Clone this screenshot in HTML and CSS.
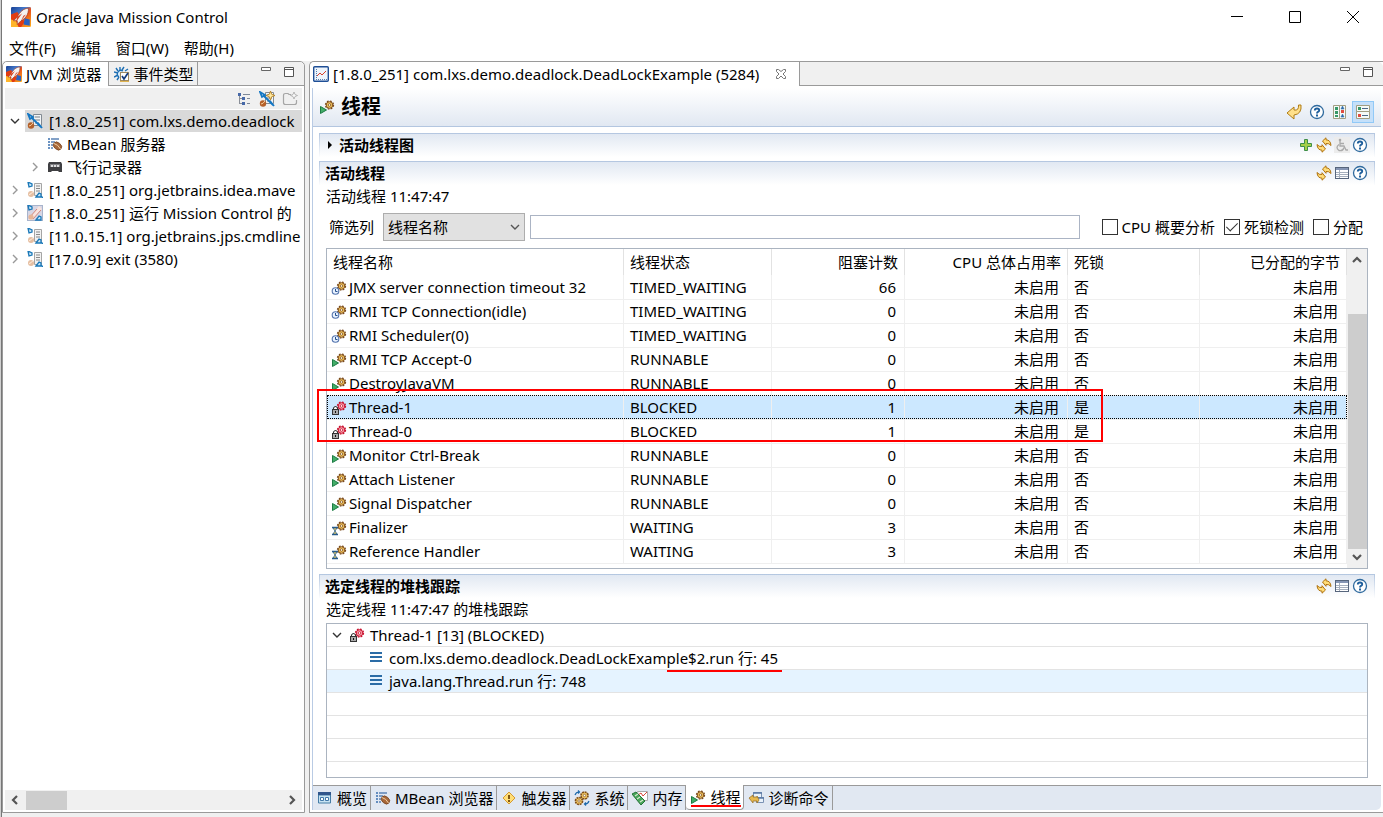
FILE: index.html
```
<!DOCTYPE html>
<html lang="zh-CN">
<head>
    <meta charset="UTF-8">
    <meta name="viewport" content="width=device-width, initial-scale=1.0">
    <title>Oracle Java Mission Control</title>
    <link rel="stylesheet" href="styles.css">
</head>
<body>
    <svg class="defs" aria-hidden="true">
        <defs>
            <linearGradient id="sky" x1="0" y1="0" x2="1" y2="1">
                <stop offset="0" stop-color="#163f94"/>
                <stop offset=".4" stop-color="#4a7fd0"/>
                <stop offset=".55" stop-color="#e8501c"/>
                <stop offset="1" stop-color="#ffb21c"/>
            </linearGradient>
        </defs>
        <symbol id="app" viewBox="0 0 16 16">
            <rect width="16" height="16" rx="1" fill="url(#sky)"/>
            <path d="M0 6l5-2 6 8-3 4H0z" fill="#e23c12"/>
            <path d="M0 10l4 1 2 5H0z" fill="#ffb52a"/>
            <path d="M14 1C10 1 7 4 5 8l-3 3 3 0 0 3 3-3c4-2 6-5 6-10z" fill="#f4f2f0" stroke="#a23a20" stroke-width=".6"/>
            <path d="M5 8l4-3-5 7zM8 11l4-5-2 1z" fill="#d8401c"/>
            <path d="M11 9l4 1v5l-5-1z" fill="#2a62c0"/>
        </symbol>
        <symbol id="events" viewBox="0 0 16 16">
            <path d="M6 1v3M2 2l2 3M10 1L8 4M0 6l4 1M0 11l4-2M3 14l2-3M11 5l3-2" stroke="#1d6fb4" stroke-width="1.4" fill="none"/>
            <path d="M9 5q-3-2-5 1t1 5" stroke="#1d6fb4" stroke-width="1.3" fill="#d9ecf8"/>
            <rect x="6.5" y="6.5" width="8" height="8" fill="#fff" stroke="#a08a60"/>
            <path d="M8 10l2 3 4-6" stroke="#123a7c" stroke-width="1.7" fill="none"/>
            <path d="M6 15.5h9" stroke="#e0b450"/>
        </symbol>
        <symbol id="hier" viewBox="0 0 16 16">
            <path d="M3.500 4v9M3.500 7.500h3M3.500 12.500h3" stroke="#8a8f98" fill="none"/>
            <path d="M2 2h3v3H2zM6 6h3v3H6zM6 11h3v3H6z" fill="#4668a8"/>
            <path d="M7 3.500h7M11 7.500h3M11 12.500h3" stroke="#7d8898"/>
        </symbol>
        <symbol id="conn" viewBox="0 0 16 16">
            <path d="M6.500 1.500h8v11h-8z" fill="#f2f4f6" stroke="#828a92"/>
            <path d="M8 4h5M8 7h5M8 10h4" stroke="#777e86"/>
            <circle cx="4" cy="12.500" r="3.200" fill="#b4602a"/>
            <path d="M2 13q2 0 4-3" stroke="#f4cfa0" fill="none"/>
            <path d="M1 1l2 5 3-2zM4 4l10 10M11 10l4 5" stroke="#1477c4" stroke-width="1.800" fill="none"/>
        </symbol>
        <symbol id="conn-new" viewBox="0 0 16 16">
            <use href="#conn"/>
            <path d="M11.500 0l1.200 3.300L16 4.500l-3.300 1.200L11.500 9l-1.200-3.300L7 4.500l3.300-1.200z" fill="#ffe9a0" stroke="#b07818" stroke-width=".8"/>
        </symbol>
        <symbol id="conn-off" viewBox="0 0 16 16">
            <path d="M7.500 1.500h7v12h-7z" fill="#f2f2f2" stroke="#a5a5a5"/>
            <path d="M9 4h4M9 6.500h4M9 9h4" stroke="#888"/>
            <circle cx="4" cy="12" r="3" fill="#e6bfa2"/>
            <path d="M2 12.500q2 0 4-3" stroke="#fff0e2" fill="none"/>
            <path d="M1 0l1 5 3-1V2zM9 15l3-4 2 1v3zM14 14l2 2" stroke="#1a78b8" stroke-width="1.300" fill="#c8e4f5"/>
        </symbol>
        <symbol id="conn-self" viewBox="0 0 16 16">
            <rect x=".5" y=".5" width="15" height="15" fill="#d8d6e4" stroke="#a8b4cc"/>
            <path d="M1 15L12 1l3 3L5 15z" fill="#f8e4df"/>
            <path d="M2 13l8-9M6 14l8-9" stroke="#d48578"/>
            <circle cx="4" cy="12" r="2.600" fill="#e6b597"/>
            <path d="M1 0l1 5 3-1V2zM9 15l3-4 2 1v3z" stroke="#1a78b8" stroke-width="1.300" fill="#c8e4f5"/>
        </symbol>
        <symbol id="folder-new" viewBox="0 0 16 16">
            <path d="M9 3.500H7L6 2.500H3.500q-2 0-2 2v7q0 2 2 2h9q2 0 2-2V9" fill="none" stroke="#a6a6a6" stroke-width="1.200"/>
            <path d="M12 1l1 2.500 2.500 1-2.500 1L12 8l-1-2.500-2.500-1 2.500-1z" fill="#f8f8f8" stroke="#a6a6a6" stroke-width=".8"/>
        </symbol>
        <symbol id="mbean" viewBox="0 0 16 16">
            <path d="M1 3h2M1 6h2M1 9h2M1 12h2" stroke="#3a6fae" stroke-width="1.600"/>
            <path d="M4 3h8M4 6h4M4 9h2M4 12h2" stroke="#5b83b5" stroke-width="1.400"/>
            <ellipse cx="10.500" cy="10" rx="4.500" ry="3.400" transform="rotate(40 10.500 10)" fill="#a8683a" stroke="#6e3c18" stroke-width=".7"/>
            <path d="M7 7.500q4 1 6.500 5.500" stroke="#f2d0a4" fill="none"/>
        </symbol>
        <symbol id="recorder" viewBox="0 0 16 16">
            <path d="M2 3h12l1 2v8h-3l-1-1H5l-1 1H1V5z" fill="#3f3f42"/>
            <path d="M3 5h10v3H3z" fill="#808084"/>
            <path d="M4 7h2M7 7h2M10 7h2" stroke="#fff" stroke-width="1.500"/>
        </symbol>
        <symbol id="chart" viewBox="0 0 16 16">
            <rect x=".7" y=".7" width="14.600" height="14.600" rx="1" fill="#eef5fc" stroke="#1f4f96" stroke-width="1.400"/>
            <path d="M3 13.500h11" stroke="#567cae" stroke-dasharray="1 1"/>
            <path d="M3.500 3v10" stroke="#567cae" stroke-dasharray="1 1"/>
            <path d="M4 10l3-3 2 2 4-4" stroke="#d8402c" fill="none"/>
        </symbol>
        <symbol id="gear" viewBox="0 0 16 16">
            <circle cx="10.500" cy="6" r="4" fill="none" stroke="#7a4a1c" stroke-width="1.300" stroke-dasharray="1.800 1.340"/>
            <circle cx="10.500" cy="6" r="3.300" fill="#f2c35c" stroke="#80501c"/>
            <circle cx="10.500" cy="6" r="1.300" fill="#fff8e0" stroke="#80501c" stroke-width=".8"/>
        </symbol>
        <symbol id="run" viewBox="0 0 16 16">
            <use href="#gear"/>
            <path d="M1.500 7.500l6 3.500-6 3.500z" fill="#43ad68" stroke="#1d7c44"/>
        </symbol>
        <symbol id="timed" viewBox="0 0 16 16">
            <use href="#gear"/>
            <circle cx="4.500" cy="11" r="3.300" fill="#eaf3ff" stroke="#5374ae" stroke-width="1.100"/>
            <path d="M4.500 9V11.500h2" stroke="#24508e" fill="none"/>
        </symbol>
        <symbol id="wait" viewBox="0 0 16 16">
            <use href="#gear"/>
            <path d="M1 7.500h6M1 14.500h6" stroke="#285c8c" stroke-width="1.300"/>
            <path d="M2 8l4 0-2 3 2 3H2l2-3z" fill="#f4d462" stroke="#285c8c" stroke-width=".8"/>
        </symbol>
        <symbol id="blocked" viewBox="0 0 16 16">
            <circle cx="10.500" cy="6" r="4" fill="none" stroke="#c8102e" stroke-width="1.300" stroke-dasharray="1.800 1.340"/>
            <circle cx="10.500" cy="6" r="3.300" fill="#f8a0aa" stroke="#c8102e"/>
            <circle cx="10.500" cy="6" r="1.300" fill="#fff" stroke="#c8102e" stroke-width=".8"/>
            <path d="M2.500 10V8q2-3 4 0v2" fill="#fff" stroke="#333" stroke-width="1.100"/>
            <rect x="1.500" y="9.500" width="6" height="5" fill="#aaa" stroke="#333"/>
            <path d="M4.500 11v2" stroke="#111"/>
        </symbol>
        <symbol id="back" viewBox="0 0 16 16">
            <path d="M1 9l7-6v3q5 1 4.500-5H15q1 9-7 10v4z" fill="#ffe08a" stroke="#b07c14" stroke-linejoin="round"/>
        </symbol>
        <symbol id="help" viewBox="0 0 16 16">
            <circle cx="8" cy="8" r="6.500" fill="#fff" stroke="#2f6a9e" stroke-width="1.300"/>
            <path d="M5.800 6.500q0-2 2.200-2t2.200 1.700q0 1-1.200 1.600-1 .6-1 1.700" fill="none" stroke="#1f5f9c" stroke-width="1.900"/>
            <rect x="7" y="10.500" width="2" height="2" fill="#1f5f9c"/>
        </symbol>
        <symbol id="cols" viewBox="0 0 16 16">
            <path d="M1.500 1.500h6v13h-6zM7.500 1.500h6v13h-6z" fill="#f5faf8" stroke="#a29e82"/>
            <path d="M3 3h3v3H3zM3 7h3v3H3zM3 11h3v2H3z" fill="#389868"/>
            <path d="M9 5l1.500-3L12 5zM9 13l1.500-3 1.500 3z" fill="#2e6cac" stroke="#2e6cac" stroke-width=".6"/>
            <path d="M9 6h3v3H9z" fill="#e04c40"/>
        </symbol>
        <symbol id="rows" viewBox="0 0 16 16">
            <path d="M1.500 1.500h13v6h-13zM1.500 7.500h13v7h-13z" fill="#f5faf8" stroke="#a29e82"/>
            <path d="M3 3h3v3H3z" fill="#389868"/>
            <path d="M3 10h3v3H3z" fill="#e04c40"/>
            <path d="M7 4.500h6M7 11.500h6" stroke="#4a6888"/>
        </symbol>
        <symbol id="plus" viewBox="0 0 16 16">
            <path d="M6.500 2.500h3v4h4v3h-4v4h-3v-4h-4v-3h4z" fill="#a5cf49" stroke="#3f8f48"/>
        </symbol>
        <symbol id="refresh" viewBox="0 0 16 16">
            <path d="M6.500 4L10 .8v2q4.500 0 5 5.700-2-2.500-5-2v1.800zM9.500 12L6 15.200v-2q-4.500 0-5-5.700 2 2.500 5 2V7.700z" fill="#ffdc78" stroke="#b07310" stroke-linejoin="round"/>
        </symbol>
        <symbol id="wheel" viewBox="0 0 16 16">
            <rect width="16" height="16" fill="#ececec"/>
            <circle cx="6" cy="3" r="1.300" fill="#aaa"/>
            <path d="M6 4v5h4l2 4h2M6 6.500h4" fill="none" stroke="#aaa" stroke-width="1.300"/>
            <path d="M5 7.500q-4 3 0 6 4 1 5-3" fill="none" stroke="#aaa" stroke-width="1.300"/>
        </symbol>
        <symbol id="grid" viewBox="0 0 16 16">
            <rect x="1.500" y="2.500" width="13" height="11" fill="#fff" stroke="#56657c"/>
            <path d="M2 4h12" stroke="#8595b4" stroke-width="2"/>
            <path d="M2 7.500h12M2 9.500h12M2 11.500h12M5.500 5v8" stroke="#a6afbd"/>
        </symbol>
        <symbol id="frame" viewBox="0 0 16 16">
            <path d="M1.500 5v8h12V5z" fill="#c8e3f2" stroke="#457da6"/>
            <path d="M1 3.500h13" stroke="#30568c" stroke-width="3"/>
            <path d="M3.500 7.500h3v3h-3zM8.500 7.500h3v3h-3z" fill="#fff" stroke="#4179aa"/>
        </symbol>
        <symbol id="trigger" viewBox="0 0 16 16">
            <path d="M8 2l6 6-6 6-6-6z" fill="#ffdf78" stroke="#d69a32"/>
            <path d="M8 5v4M8 10v2" stroke="#754a08" stroke-width="1.800"/>
        </symbol>
        <symbol id="system" viewBox="0 0 16 16">
            <circle cx="10.500" cy="5.500" r="3.500" fill="#f3c965" stroke="#80501c" stroke-width="1.700" stroke-dasharray="2 .7"/>
            <circle cx="5" cy="11" r="3.500" fill="#f3c965" stroke="#80501c" stroke-width="1.700" stroke-dasharray="2 .7"/>
            <circle cx="10.500" cy="5.500" r="1.200" fill="#fff" stroke="#80501c" stroke-width=".7"/>
            <circle cx="5" cy="11" r="1.200" fill="#fff" stroke="#80501c" stroke-width=".7"/>
            <path d="M1 5q1-3 4-3M4 .5L5.500 2 4 3.500M15 11q-1 3-4 3M12 12.500L10.500 14l1.500 1.500" fill="none" stroke="#1c69ab" stroke-width="1.200"/>
        </symbol>
        <symbol id="memory" viewBox="0 0 16 16">
            <path d="M5.500 1.500h10v9h-8z" fill="#fff" stroke="#aaa"/>
            <path d="M6 5l3-2 2 3 4-4" stroke="#d94538" fill="none"/>
            <path d="M0 4l4-2 9 9-4 4z" fill="#49a65b" stroke="#247338"/>
            <path d="M3 6l3-2M5 9l3-2M8 12l3-2" stroke="#d8ead0" stroke-width="1.200"/>
        </symbol>
        <symbol id="diag" viewBox="0 0 16 16">
            <path d="M5.500 2.500h8v5h-8zM8.500 7.500h7v5h-7z" fill="#e9f2fb" stroke="#7a92b4"/>
            <path d="M5 3h9M8 8h8" stroke="#5878a4" stroke-width="1.500"/>
            <path d="M1 8l4-3v2h4v-1l2 4-2 3v-2H5v2z" fill="#e8b94e" stroke="#9b752c" stroke-width=".8"/>
        </symbol>
        <symbol id="lines" viewBox="0 0 16 16">
            <path d="M2 3h12M2 7h12M2 11h12" stroke="#2b6ca6" stroke-width="2"/>
        </symbol>
        <symbol id="minimize" viewBox="0 0 16 16">
            <path d="M3.500 3.500h9v3h-9z" fill="#fff" stroke="#666"/>
        </symbol>
        <symbol id="maximize" viewBox="0 0 16 16">
            <path d="M3.500 3.500h9v9h-9zM3.500 5.500h9" fill="#fff" stroke="#555"/>
        </symbol>
        <symbol id="right" viewBox="0 0 16 16">
            <path d="M6 4l4 4-4 4" fill="none" stroke="currentColor" stroke-width="1.400"/>
        </symbol>
        <symbol id="down" viewBox="0 0 16 16">
            <path d="M4 6l4 4 4-4" fill="none" stroke="currentColor" stroke-width="1.400"/>
        </symbol>
        <symbol id="arrow" viewBox="0 0 16 16">
            <path d="M4 10l4-4 4 4" fill="none" stroke="#555" stroke-width="2.200"/>
        </symbol>
    </svg>

    <header class="titlebar">
        <svg class="logo"><use href="#app"/></svg>
        <span class="title">Oracle Java Mission Control</span>
        <button class="win-btn" aria-label="最小化"><svg viewBox="0 0 14 14"><path d="M1 6.500h12"/></svg></button>
        <button class="win-btn" aria-label="最大化"><svg viewBox="0 0 14 14"><path d="M1.500 1.500h11v11h-11z"/></svg></button>
        <button class="win-btn" aria-label="关闭"><svg viewBox="0 0 14 14"><path d="M1 1l12 12M13 1L1 13"/></svg></button>
    </header>
    <nav class="menubar">
        <button>文件(F)</button>
        <button>编辑</button>
        <button>窗口(W)</button>
        <button>帮助(H)</button>
    </nav>

    <main class="workbench">
        <aside class="pane">
            <div class="tabs">
                <button class="tab active browser-tab"><svg class="icon"><use href="#app"/></svg>JVM 浏览器</button>
                <button class="tab"><svg class="icon"><use href="#events"/></svg>事件类型</button>
                <div class="pane-controls">
                    <button aria-label="最小化"><svg class="icon"><use href="#minimize"/></svg></button>
                    <button aria-label="最大化"><svg class="icon"><use href="#maximize"/></svg></button>
                </div>
            </div>
            <div class="side-body">
                <div class="side-tools">
                    <button aria-label="树布局"><svg class="icon"><use href="#hier"/></svg></button>
                    <button aria-label="新建连接"><svg class="icon"><use href="#conn-new"/></svg></button>
                    <button aria-label="新建文件夹"><svg class="icon"><use href="#folder-new"/></svg></button>
                </div>
                <ul class="tree">
                    <li>
                        <div class="node"><svg class="twist open"><use href="#down"/></svg><span class="node-label selected"><svg class="icon"><use href="#conn"/></svg>[1.8.0_251] com.lxs.demo.deadlock</span></div>
                        <ul>
                            <li class="node"><span class="twist"></span><span class="node-label"><svg class="icon"><use href="#mbean"/></svg>MBean 服务器</span></li>
                            <li class="node"><svg class="twist"><use href="#right"/></svg><span class="node-label"><svg class="icon"><use href="#recorder"/></svg>飞行记录器</span></li>
                        </ul>
                    </li>
                    <li class="node"><svg class="twist"><use href="#right"/></svg><span class="node-label"><svg class="icon"><use href="#conn-off"/></svg>[1.8.0_251] org.jetbrains.idea.mave</span></li>
                    <li class="node"><svg class="twist"><use href="#right"/></svg><span class="node-label"><svg class="icon"><use href="#conn-self"/></svg>[1.8.0_251] 运行 Mission Control 的</span></li>
                    <li class="node"><svg class="twist"><use href="#right"/></svg><span class="node-label"><svg class="icon"><use href="#conn-off"/></svg>[11.0.15.1] org.jetbrains.jps.cmdline</span></li>
                    <li class="node"><svg class="twist"><use href="#right"/></svg><span class="node-label"><svg class="icon"><use href="#conn-off"/></svg>[17.0.9] exit (3580)</span></li>
                </ul>
                <div class="hscroll">
                    <button aria-label="向左"><svg class="icon to-left"><use href="#arrow"/></svg></button>
                    <div class="hthumb"></div>
                    <button aria-label="向右"><svg class="icon to-right"><use href="#arrow"/></svg></button>
                </div>
            </div>
        </aside>

        <section class="pane editor">
            <div class="tabs">
                <button class="tab active editor-tab"><svg class="icon"><use href="#chart"/></svg>[1.8.0_251] com.lxs.demo.deadlock.DeadLockExample (5284)<svg class="close" viewBox="0 0 12 12"><path d="M1.500 1.500h2l2.500 2 2.500-2h2v2L8 6l2.500 2.500v2h-2L6 8l-2.500 2.500h-2v-2L4 6 1.500 3.500z"/></svg></button>
                <div class="pane-controls">
                    <button aria-label="最小化"><svg class="icon"><use href="#minimize"/></svg></button>
                    <button aria-label="最大化"><svg class="icon"><use href="#maximize"/></svg></button>
                </div>
            </div>
            <div class="form">
                <div class="form-head">
                    <svg class="icon"><use href="#run"/></svg>
                    <h1>线程</h1>
                    <div class="form-tools">
                        <button aria-label="返回"><svg class="icon"><use href="#back"/></svg></button>
                        <button aria-label="帮助"><svg class="icon"><use href="#help"/></svg></button>
                        <button aria-label="垂直布局"><svg class="icon"><use href="#cols"/></svg></button>
                        <button class="pressed" aria-label="水平布局"><svg class="icon"><use href="#rows"/></svg></button>
                    </div>
                </div>

                <div class="sections">
                    <div class="section-head">
                        <span class="caret"></span>
                        <h2>活动线程图</h2>
                        <div class="section-tools">
                            <button aria-label="添加"><svg class="icon"><use href="#plus"/></svg></button>
                            <button aria-label="刷新"><svg class="icon"><use href="#refresh"/></svg></button>
                            <button aria-label="辅助功能" disabled><svg class="icon"><use href="#wheel"/></svg></button>
                            <button aria-label="帮助"><svg class="icon"><use href="#help"/></svg></button>
                        </div>
                    </div>

                    <div class="section-head">
                        <h2>活动线程</h2>
                        <div class="section-tools">
                            <button aria-label="刷新"><svg class="icon"><use href="#refresh"/></svg></button>
                            <button aria-label="表设置"><svg class="icon"><use href="#grid"/></svg></button>
                            <button aria-label="帮助"><svg class="icon"><use href="#help"/></svg></button>
                        </div>
                    </div>
                    <div class="section-body">
                        <p class="status">活动线程 11:47:47</p>
                        <div class="filter">
                            <label for="filter-column">筛选列</label>
                            <span class="select">
                                <select id="filter-column"><option>线程名称</option></select>
                                <svg class="icon"><use href="#down"/></svg>
                            </span>
                            <input type="text" class="filter-text" aria-label="筛选文本">
                            <div class="checks">
                                <label><input type="checkbox">CPU 概要分析</label>
                                <label><input type="checkbox" checked>死锁检测</label>
                                <label><input type="checkbox">分配</label>
                            </div>
                        </div>
                        <div class="threads">
                            <table>
                                <colgroup><col><col class="c-state"><col class="c-count"><col class="c-cpu"><col class="c-lock"><col class="c-bytes"></colgroup>
                                <thead>
                                    <tr><th>线程名称</th><th>线程状态</th><th class="num">阻塞计数</th><th class="num">CPU 总体占用率</th><th>死锁</th><th class="num">已分配的字节</th></tr>
                                </thead>
                                <tbody>
                                    <tr><td><svg class="icon"><use href="#timed"/></svg>JMX server connection timeout 32</td><td>TIMED_WAITING</td><td class="num">66</td><td class="num">未启用</td><td>否</td><td class="num">未启用</td></tr>
                                    <tr><td><svg class="icon"><use href="#timed"/></svg>RMI TCP Connection(idle)</td><td>TIMED_WAITING</td><td class="num">0</td><td class="num">未启用</td><td>否</td><td class="num">未启用</td></tr>
                                    <tr><td><svg class="icon"><use href="#timed"/></svg>RMI Scheduler(0)</td><td>TIMED_WAITING</td><td class="num">0</td><td class="num">未启用</td><td>否</td><td class="num">未启用</td></tr>
                                    <tr><td><svg class="icon"><use href="#run"/></svg>RMI TCP Accept-0</td><td>RUNNABLE</td><td class="num">0</td><td class="num">未启用</td><td>否</td><td class="num">未启用</td></tr>
                                    <tr><td><svg class="icon"><use href="#run"/></svg>DestroyJavaVM</td><td>RUNNABLE</td><td class="num">0</td><td class="num">未启用</td><td>否</td><td class="num">未启用</td></tr>
                                    <tr class="selected"><td><svg class="icon"><use href="#blocked"/></svg>Thread-1</td><td>BLOCKED</td><td class="num">1</td><td class="num">未启用</td><td>是</td><td class="num">未启用</td></tr>
                                    <tr><td><svg class="icon"><use href="#blocked"/></svg>Thread-0</td><td>BLOCKED</td><td class="num">1</td><td class="num">未启用</td><td>是</td><td class="num">未启用</td></tr>
                                    <tr><td><svg class="icon"><use href="#run"/></svg>Monitor Ctrl-Break</td><td>RUNNABLE</td><td class="num">0</td><td class="num">未启用</td><td>否</td><td class="num">未启用</td></tr>
                                    <tr><td><svg class="icon"><use href="#run"/></svg>Attach Listener</td><td>RUNNABLE</td><td class="num">0</td><td class="num">未启用</td><td>否</td><td class="num">未启用</td></tr>
                                    <tr><td><svg class="icon"><use href="#run"/></svg>Signal Dispatcher</td><td>RUNNABLE</td><td class="num">0</td><td class="num">未启用</td><td>否</td><td class="num">未启用</td></tr>
                                    <tr><td><svg class="icon"><use href="#wait"/></svg>Finalizer</td><td>WAITING</td><td class="num">3</td><td class="num">未启用</td><td>否</td><td class="num">未启用</td></tr>
                                    <tr><td><svg class="icon"><use href="#wait"/></svg>Reference Handler</td><td>WAITING</td><td class="num">3</td><td class="num">未启用</td><td>否</td><td class="num">未启用</td></tr>
                                </tbody>
                            </table>
                            <div class="vscroll">
                                <button aria-label="向上"><svg class="icon"><use href="#arrow"/></svg></button>
                                <div class="vthumb"></div>
                                <button aria-label="向下"><svg class="icon to-down"><use href="#arrow"/></svg></button>
                            </div>
                            <div class="marker"></div>
                        </div>
                    </div>

                    <div class="section-head">
                        <h2>选定线程的堆栈跟踪</h2>
                        <div class="section-tools">
                            <button aria-label="刷新"><svg class="icon"><use href="#refresh"/></svg></button>
                            <button aria-label="表设置"><svg class="icon"><use href="#grid"/></svg></button>
                            <button aria-label="帮助"><svg class="icon"><use href="#help"/></svg></button>
                        </div>
                    </div>
                    <div class="section-body grow">
                        <p class="status">选定线程 11:47:47 的堆栈跟踪</p>
                        <ul class="stack">
                            <li class="thread"><svg class="twist open"><use href="#down"/></svg><svg class="icon"><use href="#blocked"/></svg>Thread-1 [13] (BLOCKED)</li>
                            <li class="trace"><svg class="icon"><use href="#lines"/></svg><span>com.lxs.demo.deadlock.DeadLockExam<span class="underlined">ple$2.run 行: 45</span></span></li>
                            <li class="trace hot"><svg class="icon"><use href="#lines"/></svg>java.lang.Thread.run 行: 748</li>
                        </ul>
                    </div>
                </div>

                <nav class="pages">
                    <button><svg class="icon"><use href="#frame"/></svg>概览</button>
                    <button><svg class="icon"><use href="#mbean"/></svg>MBean 浏览器</button>
                    <button><svg class="icon"><use href="#trigger"/></svg>触发器</button>
                    <button><svg class="icon"><use href="#system"/></svg>系统</button>
                    <button><svg class="icon"><use href="#memory"/></svg>内存</button>
                    <button class="active"><svg class="icon"><use href="#run"/></svg>线程</button>
                    <button><svg class="icon"><use href="#diag"/></svg>诊断命令</button>
                </nav>
            </div>
        </section>
    </main>
</body>
</html>
```
FILE: styles.css
```
* {
    box-sizing: border-box;
}
body {
    display: flex;
    flex-direction: column;
    min-height: 100vh;
    margin: 0;
    padding-left: 1px;
    border-left: 1px solid #d0d0d0;
    box-shadow: inset 1px 0 #777;
    background-color: #fff;
    color: #000;
    font-family: "Noto Sans", "Noto Sans CJK SC", sans-serif;
    font-size: 15px;
    line-height: 22px;
}
h1, h2, p, ul {
    margin: 0;
    padding: 0;
}
ul {
    list-style: none;
}
button, input, select {
    font: inherit;
    color: inherit;
}
button {
    padding: 0;
    border: none;
    background: none;
    white-space: nowrap;
}
.defs {
    position: absolute;
    width: 0;
    height: 0;
}
.icon {
    display: block;
    flex: none;
    width: 16px;
    height: 16px;
}

/* window frame */
.titlebar {
    display: flex;
    align-items: center;
    height: 35px;
    padding: 0 1px 2px 9px;
}
.logo {
    width: 20px;
    height: 20px;
    margin-right: 5px;
}
.title {
    flex: 1;
}
.win-btn {
    display: flex;
    align-items: center;
    justify-content: center;
    width: 58px;
    height: 33px;
}
.win-btn svg {
    width: 14px;
    height: 14px;
    fill: none;
    stroke: #000;
}
.menubar {
    display: flex;
    align-items: center;
    gap: 15px;
    height: 26px;
    padding-left: 7px;
}
.workbench {
    flex: 1;
    display: grid;
    grid-template-columns: 303px minmax(0, 1fr);
    gap: 4px;
    padding-bottom: 4px;
    background-color: #f0f0f0;
}

/* panes and their tabs */
.pane {
    display: flex;
    flex-direction: column;
    min-width: 0;
    border: 1px solid #9a9a9a;
    border-radius: 5px 5px 0 0;
    background-color: #fff;
}
.editor {
    border-right: none;
    border-top-right-radius: 0;
}
.tabs {
    display: flex;
    height: 24px;
    border-bottom: 1px solid #9a9a9a;
    border-radius: 5px 5px 0 0;
    background-color: #f0f0f0;
}
.tab {
    display: flex;
    align-items: center;
    gap: 4px;
    height: 23px;
    padding: 0 3px 0 5px;
    border-right: 1px solid #9a9a9a;
}
.tab.active {
    height: 24px;
    padding: 0 6px 0 3px;
    border-radius: 5px 0 0 0;
    background-color: #fff;
}
.tab.editor-tab {
    padding-right: 12px;
}
.close {
    width: 12px;
    height: 12px;
    margin-left: 12px;
    fill: #fff;
    stroke: #777;
}
.pane-controls {
    display: flex;
    gap: 7px;
    margin-left: auto;
    padding-right: 7px;
}
.pane-controls button {
    height: 20px;
}

/* browser tree */
.side-body {
    flex: 1;
    display: flex;
    flex-direction: column;
    padding: 2px;
    overflow: hidden;
}
.side-tools {
    display: flex;
    align-items: center;
    justify-content: flex-end;
    gap: 7px;
    height: 21px;
    padding-right: 4px;
    background-color: #f0f0f0;
}
.tree {
    flex: 1;
    overflow: hidden;
}
.tree ul {
    padding-left: 20px;
}
.node {
    display: flex;
    align-items: center;
    height: 23px;
}
.twist {
    flex: none;
    width: 16px;
    height: 16px;
    margin: 0 2px;
    color: #999;
}
.twist.open {
    color: #333;
}
.node-label {
    flex: 1;
    display: flex;
    align-items: center;
    gap: 6px;
    height: 22px;
    padding-left: 2px;
    white-space: nowrap;
}
.tree ul .node-label {
    gap: 4px;
}
.node-label.selected {
    background-color: #d9d9d9;
}
.hscroll {
    display: flex;
    align-items: center;
    justify-content: space-between;
    height: 20px;
    padding: 0 2px;
    background-color: #f0f0f0;
}
.hthumb {
    width: 41px;
    height: 19px;
    margin: 0 auto 0 3px;
    background-color: #cdcdcd;
}
.to-left {
    transform: rotate(-90deg);
}
.to-right {
    transform: rotate(90deg);
}
.to-down {
    transform: rotate(180deg);
}

/* editor form */
.form {
    flex: 1;
    display: flex;
    flex-direction: column;
    margin: 2px;
    border-left: 1px solid #b9cbe4;
}
.form-head {
    display: flex;
    align-items: center;
    gap: 6px;
    height: 39px;
    padding: 0 7px 0 6px;
    border-bottom: 1px solid #b3c6e0;
    background: linear-gradient(#fff, #e1e8f2);
}
h1 {
    font-size: 20px;
    line-height: 24px;
}
.form-tools {
    display: flex;
    align-items: center;
    gap: 7px;
    margin-left: auto;
    padding-top: 10px;
}
.form-tools .pressed {
    margin-left: -3px;
    padding: 2px;
    border: 1px solid #91c9f7;
    background-color: #c5e0fa;
}
.sections {
    flex: 1;
    display: flex;
    flex-direction: column;
    padding: 6px 6px 7px;
}
.section-head {
    display: flex;
    align-items: center;
    height: 24px;
    padding: 0 6px 1px 5px;
    border: 1px solid #b9cbe4;
    border-bottom: none;
    border-image: linear-gradient(#b3c6e0, #fff) 1;
    background: linear-gradient(#e1e8f2, #fff);
}
.section-head + .section-head {
    margin-top: 4px;
}
h2 {
    font-size: 15px;
    line-height: 22px;
}
.caret {
    margin: 0 7px 0 3px;
    border: 4px solid transparent;
    border-left-color: #000;
    border-right: none;
}
.section-tools {
    display: flex;
    gap: 2px;
    margin-left: auto;
}
.section-body {
    display: flex;
    flex-direction: column;
    padding: 0 7px 5px;
}
.section-body.grow {
    flex: 1;
    padding-bottom: 0;
}
.status {
    height: 25px;
}
.filter {
    display: flex;
    align-items: center;
    height: 34px;
    padding: 0 5px 0 3px;
    margin-bottom: 4px;
}
.select {
    position: relative;
    width: 142px;
    margin: 0 5px 0 9px;
}
.select select {
    appearance: none;
    display: block;
    width: 100%;
    height: 28px;
    padding: 0 4px;
    border: 1px solid #adadad;
    border-radius: 0;
    background-color: #e1e1e1;
}
.select .icon {
    position: absolute;
    top: 6px;
    right: 2px;
    color: #555;
    pointer-events: none;
}
.filter-text {
    flex: 1;
    min-width: 0;
    height: 24px;
    border: 1px solid #abb4c4;
    background-color: #fff;
}
.checks {
    display: flex;
    gap: 9px;
    margin-left: 22px;
}
.checks label {
    display: flex;
    align-items: center;
    gap: 4px;
    white-space: nowrap;
}
.checks input {
    appearance: none;
    display: flex;
    justify-content: center;
    width: 16px;
    height: 16px;
    margin: 0;
    border: 1px solid #333;
    background-color: #fff;
}
.checks input:checked::after {
    content: "";
    width: 5px;
    height: 10px;
    border: solid #333;
    border-width: 0 1px 1px 0;
    transform: rotate(45deg);
}

/* thread table */
.threads {
    position: relative;
    display: flex;
    padding-bottom: 4px;
    border: 1px solid #abb4c0;
}
table {
    flex: 1;
    table-layout: fixed;
    border-collapse: collapse;
}
.c-state {
    width: 148px;
}
.c-count {
    width: 133px;
}
.c-cpu {
    width: 163px;
}
.c-lock {
    width: 132px;
}
.c-bytes {
    width: 147px;
}
th, td {
    height: 24px;
    padding: 0 6px;
    border-right: 1px solid #efefef;
    border-bottom: 1px solid #efefef;
    font-weight: normal;
    text-align: left;
    white-space: nowrap;
}
th {
    height: 26px;
    border-right-color: #e2e2e2;
    border-bottom: none;
}
.num {
    text-align: right;
}
td.num {
    padding-right: 8px;
}
td .icon {
    display: inline-block;
    margin: 0 2px 0 -2px;
    vertical-align: -3px;
}
tr.selected {
    background-color: #cce8ff;
    outline: 1px dotted #000;
    outline-offset: -1px;
}
.vscroll {
    display: flex;
    flex-direction: column;
    align-items: center;
    width: 20px;
    margin-bottom: -4px;
    padding: 3px 0;
    background-color: #f0f0f0;
}
.vthumb {
    width: 19px;
    height: 75%;
    margin-top: auto;
    background-color: #cdcdcd;
}
.marker {
    position: absolute;
    top: 140px;
    right: 264px;
    left: -10px;
    height: 53px;
    border: 2px solid #f00;
}

/* stack trace */
.stack {
    flex: 1;
    min-height: 140px;
    border: 1px solid #abb4c0;
    background: repeating-linear-gradient(#fff 0 22px, #e3e3e3 22px 23px);
}
.stack li {
    display: flex;
    align-items: center;
    height: 23px;
    border-bottom: 1px solid #e3e3e3;
}
.thread .icon {
    margin: 0 5px 0 2px;
}
.trace {
    gap: 5px;
    padding-left: 41px;
}
.trace.hot {
    background-color: #e5f3ff;
}
.underlined {
    position: relative;
}
.underlined::after {
    content: "";
    position: absolute;
    right: -4px;
    bottom: -4px;
    left: 0;
    height: 2px;
    background-color: #f00;
}

/* page tabs */
.pages {
    display: flex;
    height: 25px;
    border-top: 1px solid #9a9a9a;
    border-radius: 0 0 5px 0;
    background-color: #e1e8f2;
}
.pages button {
    position: relative;
    display: flex;
    align-items: center;
    gap: 4px;
    padding: 0 3px 0 4px;
    border-right: 1px solid #9a9a9a;
}
.pages .active {
    margin-top: -1px;
    border-bottom: 1px solid #9a9a9a;
    border-radius: 0 0 4px 4px;
    background-color: #fff;
}
.pages .active::after {
    content: "";
    position: absolute;
    right: 2px;
    bottom: 2px;
    left: 5px;
    height: 2px;
    background-color: #f00;
}
```
